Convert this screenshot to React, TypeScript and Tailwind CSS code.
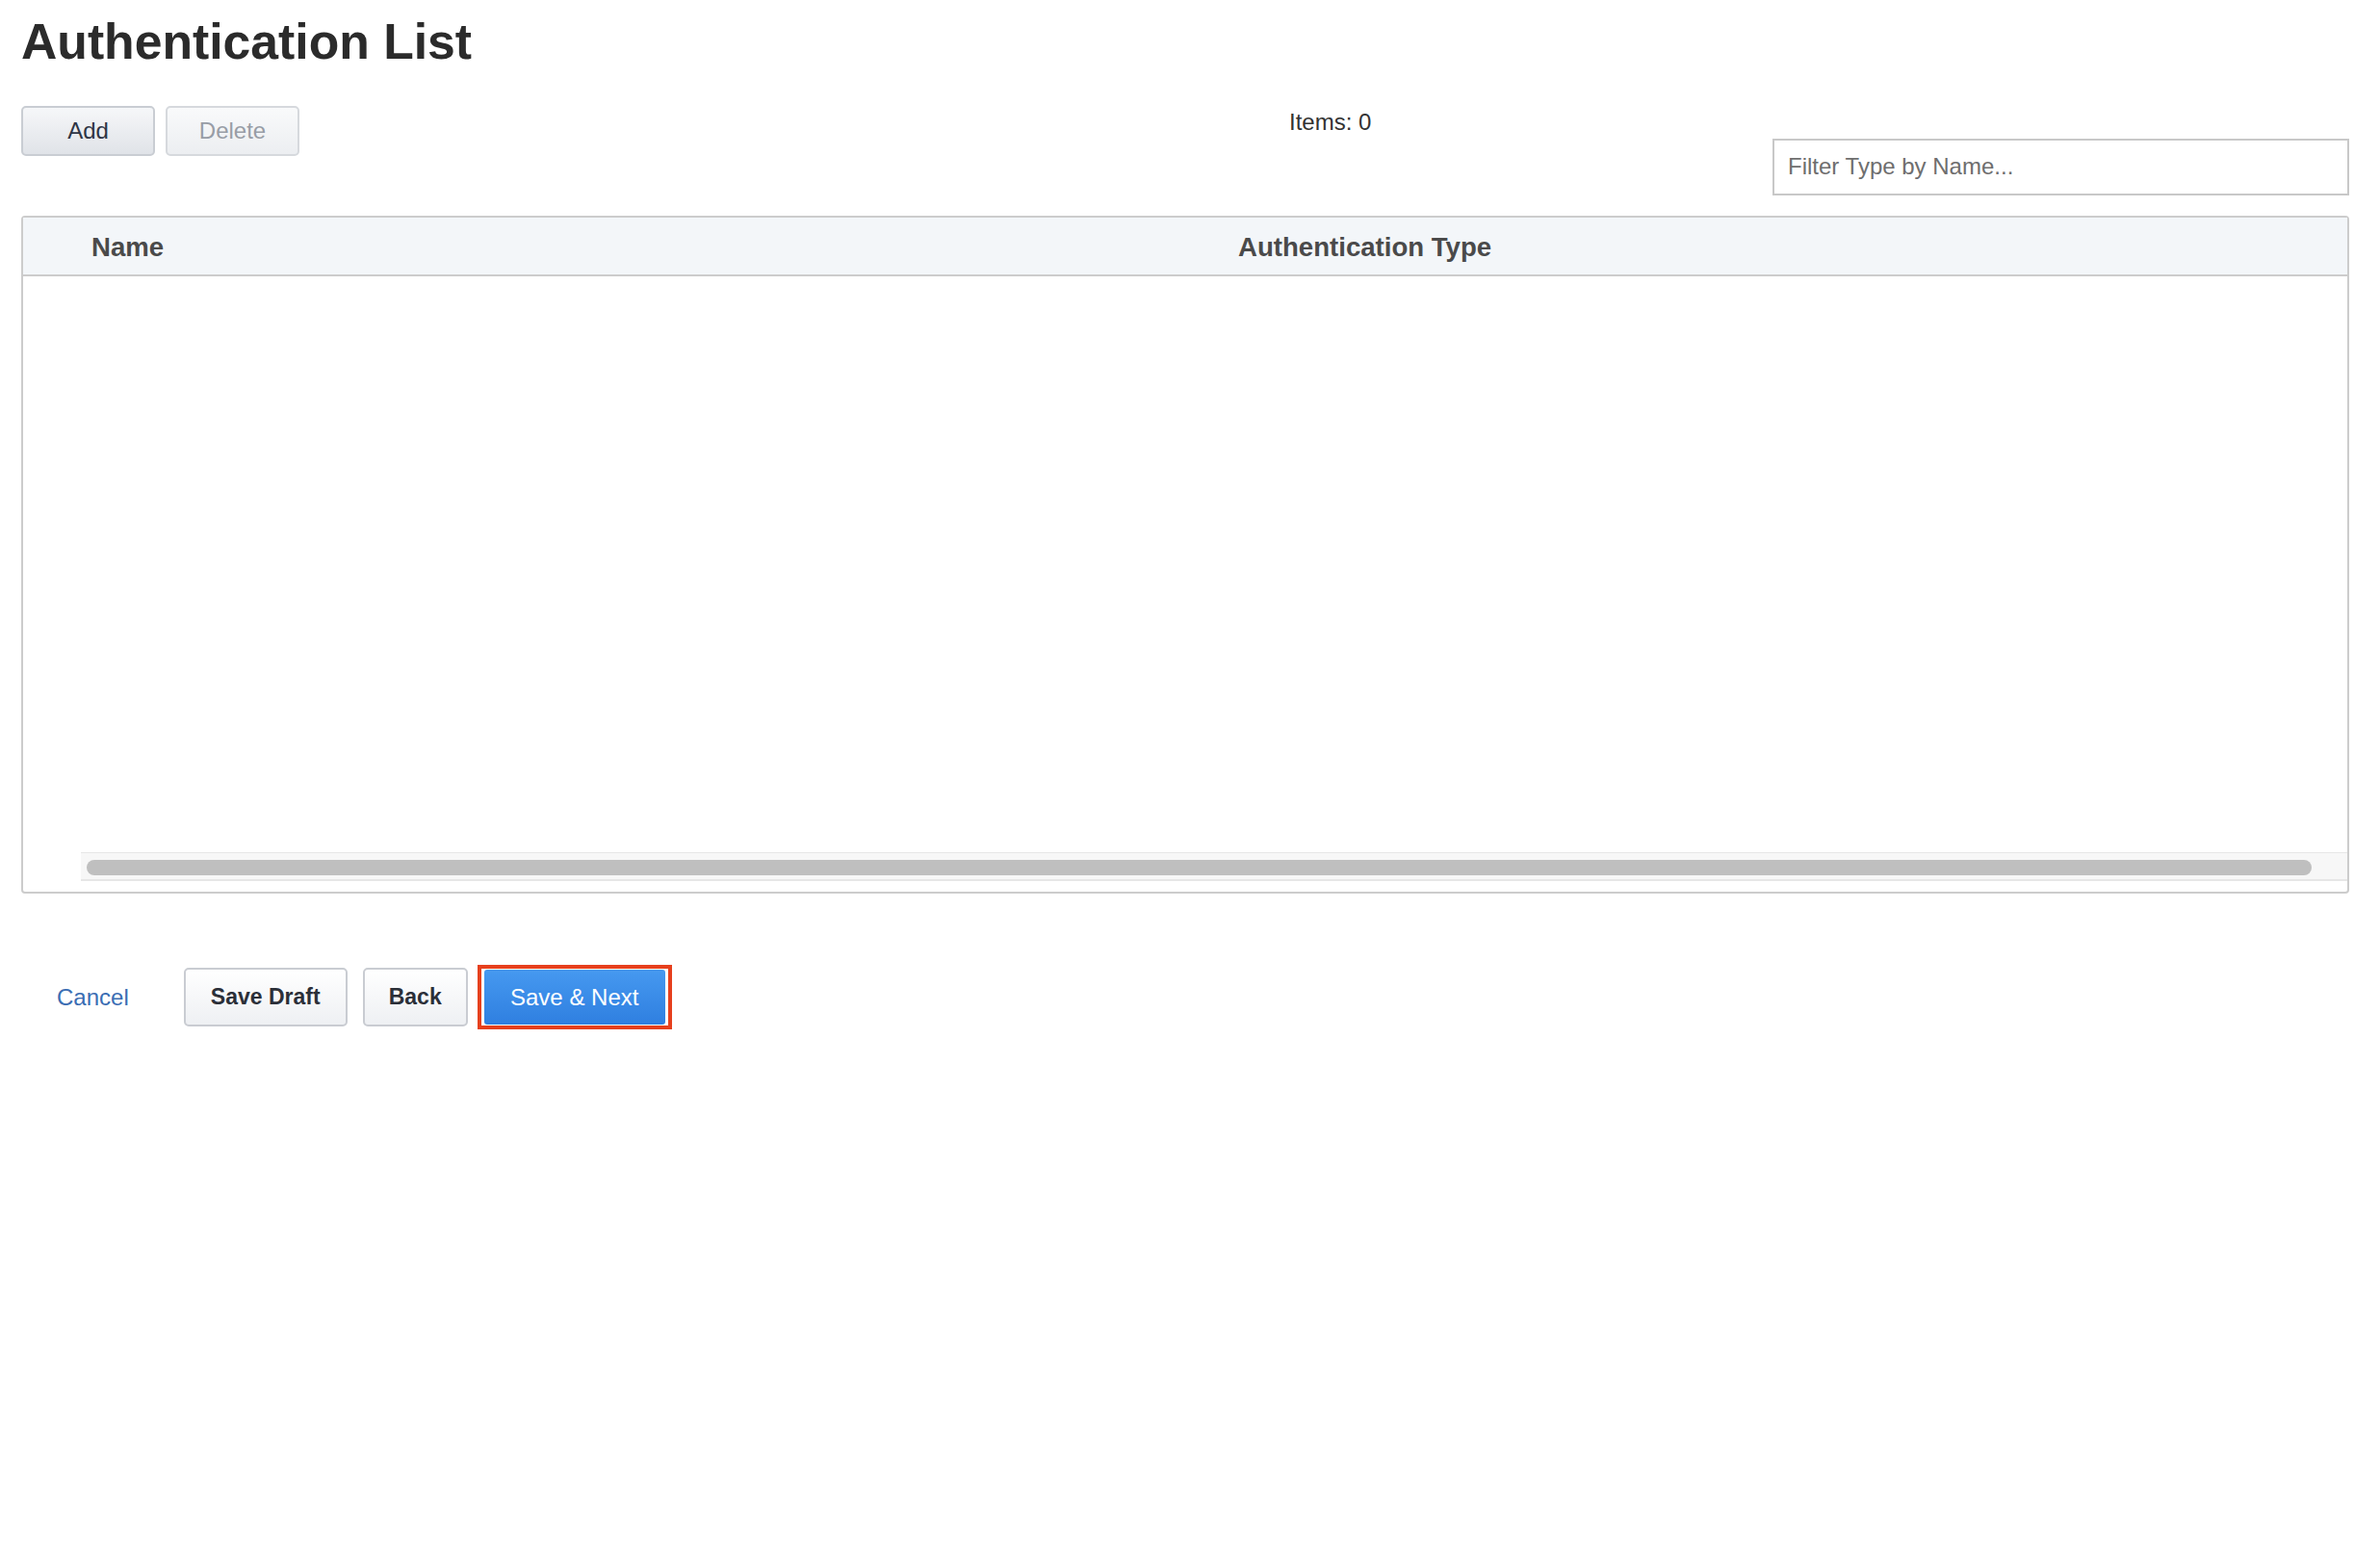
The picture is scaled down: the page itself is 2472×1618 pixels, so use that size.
import React, { useState } from 'react'

const font = { fontFamily: '"Liberation Sans", Arial, sans-serif' }

function App() {
    const [filter, setFilter] = useState('')

    return (
        <div className="min-h-screen bg-white pl-[22px] pr-[32px]" style={font}>
            {/* Title */}
            <h1 className="pt-[18px] text-[51.7px] font-bold leading-none text-[#2b2b2b]">
                Authentication List
            </h1>

            {/* Toolbar */}
            <div className="mt-[40px] flex items-start">
                <div className="flex gap-[11px]">
                    <button className="h-[52px] w-[139px] rounded-[5px] border-2 border-[#c9cdd3] bg-gradient-to-b from-[#f6f7f9] to-[#e0e3e8] text-[24px] leading-none text-[#2e3545]">
                        Add
                    </button>
                    <button className="h-[52px] w-[139px] rounded-[5px] border-2 border-[#d6d9dd] bg-gradient-to-b from-[#f9fafb] to-[#eceef1] text-[24px] leading-none text-[#989da6]">
                        Delete
                    </button>
                </div>
                <div className="ml-[1028px] mt-[5px] text-[24px] leading-none text-[#333333]">Items: 0</div>
                <input
                    value={filter}
                    onChange={(e) => setFilter(e.target.value)}
                    placeholder="Filter Type by Name..."
                    className="ml-auto mt-[34px] h-[59px] w-[599px] border-2 border-[#c8c8c8] bg-white px-[14px] text-[24px] text-[#333] outline-none placeholder:text-[#6e6e6e]"
                />
            </div>

            {/* Table */}
            <div className="mt-[21px] rounded-[4px] border-2 border-[#cccccc]">
                <div className="flex border-b-2 border-[#cccccc] bg-[#f3f6f9] pt-[17px] pb-[15px] text-[27.6px] font-bold leading-none text-[#4a4a4a]">
                    <div className="w-[60px] shrink-0" />
                    <div className="w-[1191px] shrink-0 pl-[11px]">Name</div>
                    <div className="flex-1 pl-[11px]">Authentication Type</div>
                </div>
                <div className="h-[598px]" />
                <div className="flex">
                    <div className="w-[60px] shrink-0" />
                    <div className="flex-1 border-t border-b-2 border-[#e6e6e6] bg-[#f7f7f7] pl-[6px] pr-[37px] pt-[7px] pb-[4px]">
                        <div className="h-[16px] rounded-full bg-[#bfbfbf]" />
                    </div>
                </div>
                <div className="h-[11px]" />
            </div>

            {/* Footer actions */}
            <div className="mt-[74px] flex items-center">
                <a href="#" className="ml-[37px] text-[24px] leading-none text-[#3a6db3]">
                    Cancel
                </a>
                <button className="ml-[57px] h-[61px] w-[170px] rounded-[5px] border-2 border-[#c9ccd2] bg-gradient-to-b from-white to-[#eef0f3] text-[23px] font-bold leading-none text-[#2b2f38]">
                    Save Draft
                </button>
                <button className="ml-[16px] h-[61px] w-[109px] rounded-[5px] border-2 border-[#c9ccd2] bg-gradient-to-b from-white to-[#eef0f3] text-[23px] font-bold leading-none text-[#2b2f38]">
                    Back
                </button>
                <div className="ml-[10px] border-4 border-[#e6401d] px-[3px] py-px">
                    <button className="block h-[57px] w-[188px] rounded-[3px] bg-gradient-to-b from-[#4699f0] to-[#2f7fe0] text-[24px] leading-none text-white">
                        Save &amp; Next
                    </button>
                </div>
            </div>
        </div>
    )
}

export default App
